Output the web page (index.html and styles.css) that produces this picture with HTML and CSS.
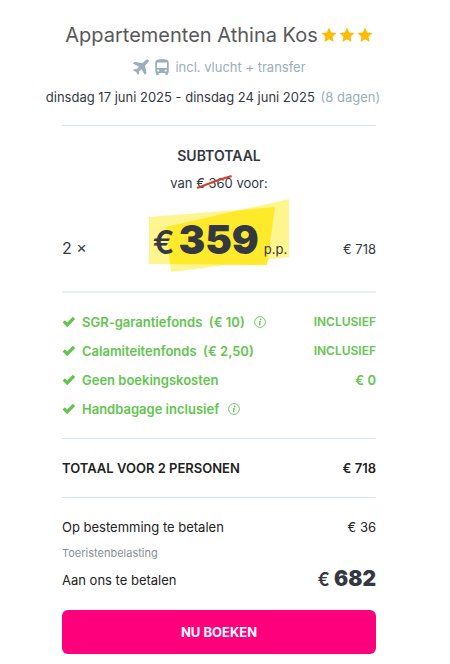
FILE: index.html
```html
<!DOCTYPE html>
<html lang="nl">

<head>
    <meta charset="UTF-8">
    <meta name="viewport" content="width=device-width, initial-scale=1.0">
    <title>Appartementen Athina Kos</title>
    <link rel="stylesheet" href="styles.css">
</head>

<body>
    <!-- shared icons -->
    <svg class="sprite" aria-hidden="true">
        <symbol id="star" viewBox="0 0 16 16">
            <path d="M8 .6l2.2 4.9 5.3.6-4 3.6 1.1 5.3L8 12.3 3.4 15l1.1-5.3-4-3.6 5.3-.6z" />
        </symbol>
        <symbol id="check" viewBox="0 0 14 12">
            <path d="M.6 6.6l2.3-2.3 2.3 2.1L10.8.8l2.4 2.3-8 8.2z" />
        </symbol>
        <symbol id="info" viewBox="0 0 12 12">
            <circle cx="6" cy="6" r="5.4" fill="none" stroke="currentColor" stroke-width=".9" />
            <circle cx="6.6" cy="3.3" r=".9" />
            <path d="M4.7 5.1l2.3-.3-.9 3.5c-.1.5.4.2.8-.3l.2.2c-.6.9-2.5 1.5-2.3.2l.7-2.8-.8-.2z" />
        </symbol>
    </svg>

    <header class="trip">
        <h1 class="trip-title">Appartementen Athina Kos
            <span class="stars" role="img" aria-label="3 sterren">
                <svg class="star"><use href="#star" /></svg>
                <svg class="star"><use href="#star" /></svg>
                <svg class="star"><use href="#star" /></svg>
            </span>
        </h1>
        <p class="transport">
            <svg class="icon-plane" viewBox="0 0 17 17" aria-hidden="true">
                <path d="M16.4.9c.7.7.3 2-.6 2.9L13 6.700l1.500 7.300-1.800 1.800L9.500 10.100 7 12.500l.2 2.300-1.300 1.300-1.700-3.100L1 11.300l1.400-1.300 2.300.3L7 7.800.9 4.500l1.800-1.800 7.600 1.500L13.300 1.400c.9-.9 2.400-1.200 3.100-.5z" />
            </svg>
            <svg class="icon-bus" viewBox="0 0 14 16" aria-hidden="true">
                <path fill-rule="evenodd" d="M3 .6C5 0 9 0 11 .6c1.800.4 2.700 1.400 2.700 3V13c0 .5-.3 1-.8 1.200v1c0 .5-.3.800-.8.800h-1c-.5 0-.8-.3-.8-.8V14H3.700v1.200c0 .5-.3.800-.8.800h-1c-.5 0-.8-.3-.8-.8v-1C.6 14 .3 13.500.3 13V3.600c0-1.600.9-2.600 2.700-3zM2 3.500V9h10V3.500zM3.300 10.500a1.100 1.100 0 100 2.200 1.100 1.100 0 000-2.200zm7.400 0a1.100 1.100 0 100 2.200 1.100 1.100 0 000-2.200z" />
            </svg>
            incl. vlucht + transfer
        </p>
        <p class="dates">dinsdag 17 juni 2025 - dinsdag 24 juni 2025 <span class="days">(8 dagen)</span></p>
    </header>

    <main class="summary">
        <section class="subtotal">
            <h2 class="subtotal-title">Subtotaal</h2>
            <p class="old">van <s class="old-price">€ 360<svg class="strike" viewBox="0 0 34 14" preserveAspectRatio="none" aria-hidden="true"><path d="M1 13L11 9 21 5 33 1" /></svg></s> voor:</p>
            <div class="offer">
                <span class="persons">2 ×</span>
                <p class="price">
                    <svg class="marker" viewBox="0 0 140 73" aria-hidden="true">
                        <path class="marker-light" d="M0 18L126 8 118 66 0 65z" />
                        <path class="marker-light" d="M17 28L140 0V58L22 73z" />
                        <path class="marker-dark" d="M17 28L91 11 126 8 118 66 21 65z" />
                    </svg>
                    <span class="euro">€</span><strong class="amount">359</strong><span class="pp">p.p.</span>
                </p>
                <span class="sum">€ 718</span>
            </div>
        </section>

        <ul class="benefits">
            <li class="benefit">
                <svg class="check"><use href="#check" /></svg>
                <span>SGR-garantiefonds&nbsp; (€ 10)</span>
                <svg class="info"><use href="#info" /></svg>
                <span class="benefit-value caps">Inclusief</span>
            </li>
            <li class="benefit">
                <svg class="check"><use href="#check" /></svg>
                <span>Calamiteitenfonds&nbsp; (€ 2,50)</span>
                <span class="benefit-value caps">Inclusief</span>
            </li>
            <li class="benefit">
                <svg class="check"><use href="#check" /></svg>
                <span>Geen boekingskosten</span>
                <span class="benefit-value">€ 0</span>
            </li>
            <li class="benefit">
                <svg class="check"><use href="#check" /></svg>
                <span>Handbagage inclusief</span>
                <svg class="info"><use href="#info" /></svg>
            </li>
        </ul>

        <div class="row total">
            <span>Totaal voor 2 personen</span>
            <span>€ 718</span>
        </div>

        <section class="payment">
            <div class="row">
                <span>Op bestemming te betalen</span>
                <span>€ 36</span>
            </div>
            <p class="note">Toeristenbelasting</p>
            <div class="row">
                <span>Aan ons te betalen</span>
                <span class="due"><span class="due-euro">€</span> 682</span>
            </div>
        </section>

        <button type="button" class="book">Nu boeken</button>
    </main>
</body>

</html>
```
FILE: styles.css
```css
* {
    box-sizing: border-box;
}

body {
    margin: 0;
    padding: 20px 12px 8px 0;
    background: #fff;
    color: #34383f;
    font-family: Inter, "Liberation Sans", sans-serif;
    font-size: 13px;
    line-height: 20px;
}

h1,
h2,
p,
ul {
    margin: 0;
    padding: 0;
    font-weight: 400;
}

.sprite {
    display: none;
}

.trip {
    text-align: center;
    white-space: nowrap;
}

.trip-title {
    display: flex;
    align-items: center;
    justify-content: center;
    gap: 3px;
    color: #58585c;
    font-size: 20px;
    line-height: 30px;
}

.stars {
    display: flex;
    gap: 2px;
}

.star {
    width: 16px;
    height: 16px;
    fill: #fb0;
}

.transport {
    display: flex;
    align-items: center;
    justify-content: center;
    gap: 6px;
    margin-top: 7px;
    color: #9aafba;
}

.icon-plane {
    width: 17px;
    height: 17px;
    fill: currentColor;
}

.icon-bus {
    width: 14px;
    height: 16px;
    fill: currentColor;
}

.dates {
    margin-top: 10px;
    padding-right: 12px;
}

.days {
    margin-left: 2px;
    color: #9aafba;
}

.summary {
    margin: 18px 62px 0;
}

.subtotal {
    padding: 20px 0 19px;
    border-top: 1px solid #d9e4ea;
    text-align: center;
}

.subtotal-title {
    font-size: 14px;
    font-weight: 600;
    text-transform: uppercase;
}

.old {
    margin-top: 7px;
}

.old-price {
    position: relative;
    text-decoration: none;
}

.strike {
    position: absolute;
    top: 0;
    left: 0;
    width: 100%;
    height: 14px;
    fill: none;
    stroke: #d0402f;
    stroke-width: 2;
}

.offer {
    display: grid;
    grid-template-columns: 1fr auto 1fr;
    align-items: baseline;
    margin-top: 6px;
}

.persons {
    font-size: 16px;
    text-align: left;
}

.price {
    position: relative;
    display: flex;
    align-items: baseline;
    justify-content: center;
    width: 140px;
    height: 73px;
    padding-left: 2px;
    line-height: 82px;
}

.price > span,
.amount {
    position: relative;
}

.marker {
    position: absolute;
    inset: 0;
    width: 100%;
    height: 100%;
}

.marker-light {
    fill: #fff58f;
}

.marker-dark {
    fill: #ffe92b;
}

.euro {
    margin-right: 4px;
    font-size: 32px;
    font-weight: 600;
}

.amount {
    margin-right: 5px;
    font-size: 40px;
    font-weight: 900;
}

.sum {
    text-align: right;
}

.benefits {
    display: grid;
    gap: 9px;
    padding: 19px 0;
    border-top: 2px solid #e9f0f5;
    border-bottom: 1px solid #d5e6ef;
    list-style: none;
    color: #63c54f;
    font-weight: 600;
}

.benefit {
    display: flex;
    align-items: center;
}

.check {
    width: 14px;
    height: 12px;
    margin-right: 6px;
    fill: currentColor;
}

.info {
    width: 12px;
    height: 12px;
    margin-left: 9px;
    fill: currentColor;
}

.benefit-value {
    margin-left: auto;
}

.caps {
    font-size: 12px;
    text-transform: uppercase;
}

.row {
    display: flex;
    align-items: center;
    justify-content: space-between;
}

.total {
    padding: 19px 0;
    border-bottom: 1px solid #d5e6ef;
    color: #222;
    font-weight: 600;
    text-transform: uppercase;
}

.payment {
    padding: 19px 0 20px;
    color: #222;
}

.note {
    margin: 6px 0;
    color: #858f96;
    font-size: 11px;
}

.due {
    color: #34383f;
    font-size: 21px;
    font-weight: 900;
}

.due-euro {
    font-size: 18px;
    font-weight: 600;
}

.book {
    display: block;
    width: 100%;
    padding: 12px;
    border: 0;
    border-radius: 6px;
    background: #ff007d;
    color: #fff;
    font: inherit;
    font-weight: 700;
    text-transform: uppercase;
    cursor: pointer;
}
```
